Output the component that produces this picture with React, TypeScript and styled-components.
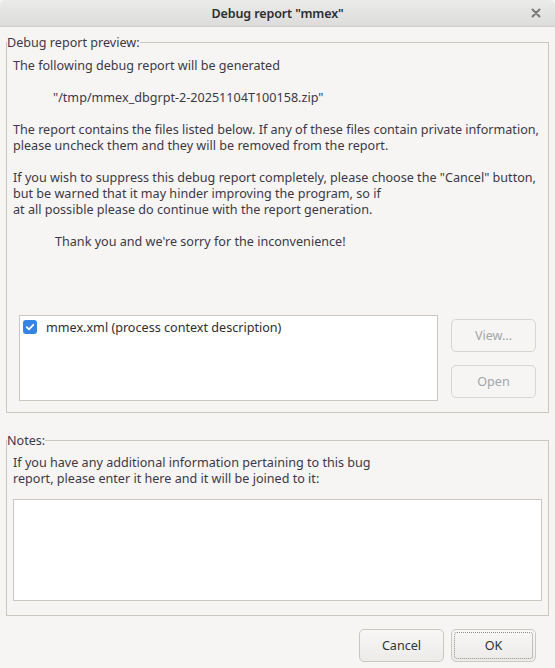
import styled, { createGlobalStyle } from 'styled-components';

const GlobalStyle = createGlobalStyle`
  html, body {
    margin: 0;
    padding: 0;
    background: #f6f5f4;
  }
  body {
    font-family: 'Noto Sans', 'Liberation Sans', sans-serif;
  }
`;

const Window = styled.div`
  width: 555px;
  height: 668px;
  display: flex;
  flex-direction: column;
  background: #f6f5f4;
  color: #3d3846;
  font-size: 12.6px;
  overflow: hidden;
`;

const TitleBar = styled.div`
  height: 27px;
  flex: none;
  display: grid;
  grid-template-columns: 40px 1fr 40px;
  align-items: center;
  background: linear-gradient(#ebebea, #dcdcdb);
  border-bottom: 1px solid #d0cfcd;
  border-radius: 6px 6px 0 0;
  box-sizing: border-box;
`;

const Title = styled.div`
  grid-column: 2;
  text-align: center;
  font-weight: 600;
  font-size: 12.5px;
  letter-spacing: -0.1px;
  color: #2e2e2e;
`;

const Close = styled.div`
  justify-self: center;
  margin-left: 2px;
  display: flex;
  align-items: center;
`;

const Body = styled.div`
  flex: 1;
  display: flex;
  flex-direction: column;
  padding: 8px 6px 0 6px;
`;

const Group = styled.fieldset<{ $height: number; $gapTop: number }>`
  margin: ${(p) => p.$gapTop}px 0 0 0;
  padding: 0 6px 0 6px;
  height: ${(p) => p.$height}px;
  box-sizing: border-box;
  border: 1px solid #cdc7c2;
  min-width: 0;
`;

const Legend = styled.legend`
  padding: 0;
  margin-left: -6px;
  font-size: 12.6px;
  line-height: 15px;
  color: #3d3846;
`;

const Lines = styled.div`
  margin-top: 8px;
  line-height: 16px;
  white-space: pre;
`;

const Line = styled.div<{ $indent?: number }>`
  height: 16px;
  padding-left: ${(p) => p.$indent ?? 0}px;
`;

const ListRow = styled.div`
  display: flex;
  gap: 13px;
  margin-top: 65px;
  padding-left: 6px;
`;

const ListBox = styled.div`
  width: 419px;
  height: 86px;
  box-sizing: border-box;
  background: #fff;
  border: 1px solid #cdc7c2;
  padding: 2px 3px;
`;

const ListItem = styled.div`
  display: flex;
  align-items: center;
  gap: 9px;
  height: 18px;
  color: #2e2e2e;
`;

const CheckBox = styled.span`
  width: 14px;
  height: 14px;
  border-radius: 3px;
  background: #3584e4;
  display: flex;
  align-items: center;
  justify-content: center;
  flex: none;
`;

const SideButtons = styled.div`
  display: flex;
  flex-direction: column;
  gap: 13px;
  padding-top: 4px;
`;

const Button = styled.button<{ $focused?: boolean }>`
  width: 85px;
  height: 33px;
  box-sizing: border-box;
  border: 1px solid #cdc7c2;
  border-radius: 5px;
  font-family: inherit;
  font-size: 12.6px;
  color: #2e3436;
  background: linear-gradient(#f8f7f6, #edebe9);
  position: relative;
  padding: 0;
  &:disabled {
    background: #f6f5f4;
    color: #a3a6a8;
    border-color: #d8d4d0;
  }
  ${(p) =>
    p.$focused &&
    `
    &::after {
      content: '';
      position: absolute;
      inset: 2px;
      border: 1px dotted #8d8d8d;
      border-radius: 3px;
    }
  `}
`;

const NotesText = styled.div`
  margin-top: 7px;
  line-height: 16px;
  white-space: pre;
`;

const NotesArea = styled.div`
  margin-top: 12px;
  height: 102px;
  box-sizing: border-box;
  background: #fff;
  border: 1px solid #cdc7c2;
`;

const Footer = styled.div`
  display: flex;
  justify-content: flex-end;
  gap: 7px;
  padding: 13px 13px 0 0;
`;

const previewLines: { text: string; indent?: number }[] = [
  { text: 'The following debug report will be generated' },
  { text: '' },
  { text: '"/tmp/mmex_dbgrpt-2-20251104T100158.zip"', indent: 40 },
  { text: '' },
  {
    text: 'The report contains the files listed below. If any of these files contain private information,',
  },
  { text: 'please uncheck them and they will be removed from the report.' },
  { text: '' },
  {
    text: 'If you wish to suppress this debug report completely, please choose the "Cancel" button,',
  },
  { text: 'but be warned that it may hinder improving the program, so if' },
  { text: 'at all possible please do continue with the report generation.' },
  { text: '' },
  { text: "Thank you and we're sorry for the inconvenience!", indent: 42 },
];

export default function App() {
  return (
    <Window>
      <GlobalStyle />
      <TitleBar>
        <Title>Debug report "mmex"</Title>
        <Close>
          <svg width="10" height="10" viewBox="0 0 10 10">
            <path
              d="M1.5 1.5 L8.5 8.5 M8.5 1.5 L1.5 8.5"
              stroke="#7a7a7a"
              strokeWidth="2"
              strokeLinecap="round"
            />
          </svg>
        </Close>
      </TitleBar>
      <Body>
        <Group $height={378} $gapTop={0}>
          <Legend>Debug report preview:</Legend>
          <Lines>
            {previewLines.map((l, i) => (
              <Line key={i} $indent={l.indent}>
                {l.text}
              </Line>
            ))}
          </Lines>
          <ListRow>
            <ListBox>
              <ListItem>
                <CheckBox>
                  <svg width="10" height="10" viewBox="0 0 10 10">
                    <path
                      d="M1.8 5.2 L4 7.3 L8.3 2.8"
                      fill="none"
                      stroke="#fff"
                      strokeWidth="1.8"
                      strokeLinecap="round"
                      strokeLinejoin="round"
                    />
                  </svg>
                </CheckBox>
                mmex.xml (process context description)
              </ListItem>
            </ListBox>
            <SideButtons>
              <Button disabled>View...</Button>
              <Button disabled>Open</Button>
            </SideButtons>
          </ListRow>
        </Group>
        <Group $height={183} $gapTop={20}>
          <Legend>Notes:</Legend>
          <NotesText>
            {'If you have any additional information pertaining to this bug\nreport, please enter it here and it will be joined to it:'}
          </NotesText>
          <NotesArea />
        </Group>
        <Footer>
          <Button>Cancel</Button>
          <Button $focused>OK</Button>
        </Footer>
      </Body>
    </Window>
  );
}
